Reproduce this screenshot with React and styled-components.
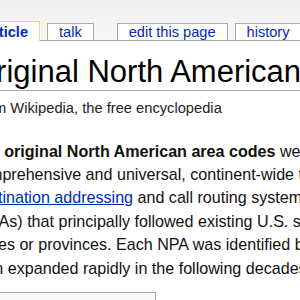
import React from 'react';
import styled, { createGlobalStyle } from 'styled-components';

const GlobalStyle = createGlobalStyle`
    html, body {
        margin: 0;
        padding: 0;
    }
    body {
        width: 300px;
        height: 300px;
        overflow: hidden;
        background: #f5f5f5;
        font-family: "Liberation Sans", Arial, sans-serif;
    }
`;

const Page = styled.div`
    width: 300px;
    height: 300px;
    overflow: hidden;
    display: flex;
    flex-direction: column;
    background: linear-gradient(180deg, #eeeeee 0px, #f4f4f4 22px, #f7f7f7 40px);
`;

const TabBar = styled.ul`
    display: flex;
    align-items: flex-end;
    list-style: none;
    height: 18px;
    margin: 0 0 0 -27px;
    padding: 22px 0 0 0;
    flex-shrink: 0;
`;

const Tab = styled.li`
    position: relative;
    z-index: 1;
    flex-shrink: 0;
    height: ${props => props.selected ? '19px' : '16px'};
    margin: 0 7px ${props => props.selected ? '-1px' : '0'} ${props => props.gap || 0}px;
    border: 1px solid ${props => props.selected ? '#f5d47c' : '#aaaaaa'};
    border-bottom: none;
    background: #ffffff;
    display: flex;
    align-items: center;
`;

const TabLink = styled.a`
    display: block;
    padding: 0 11px;
    font-size: 14.6px;
    line-height: 16px;
    color: #002bb8;
    font-weight: ${props => props.selected ? 'bold' : 'normal'};
    text-decoration: none;
    white-space: nowrap;
`;

const Content = styled.div`
    flex: 1;
    margin-left: -28px;
    background: #ffffff;
    border-top: 1px solid #aaaaaa;
    color: #000000;
`;

const Title = styled.h1`
    margin: 13px 0 0 0;
    font-size: 31px;
    font-weight: normal;
    line-height: 36px;
    white-space: nowrap;
    border-bottom: 1px solid #aaaaaa;
`;

const SiteSub = styled.div`
    margin-top: 8px;
    font-size: 14.7px;
    line-height: 18px;
    color: #222222;
    white-space: nowrap;
`;

const Para = styled.p`
    margin: 22.5px 0 0 0;
    font-size: 16.1px;
    line-height: 23.4px;
    white-space: nowrap;
    color: #111111;
`;

const Link = styled.a`
    color: #002bb8;
    text-decoration: underline;
`;

const Toc = styled.div`
    margin-top: 12px;
    width: 182px;
    height: 60px;
    border: 1px solid #aaaaaa;
    background: #f9f9f9;
    font-size: 14px;
    font-weight: bold;
    text-align: center;
    padding-top: 6px;
`;

const tabs = [
    { label: 'article', selected: true },
    { label: 'talk' },
    { label: 'edit this page', gap: 16 },
    { label: 'history' },
];

export default function App() {
    return (
        <>
            <GlobalStyle />
            <Page>
                <TabBar>
                    {tabs.map(tab => (
                        <Tab key={tab.label} selected={tab.selected} gap={tab.gap}>
                            <TabLink selected={tab.selected}>{tab.label}</TabLink>
                        </Tab>
                    ))}
                </TabBar>
                <Content>
                    <Title>Original North American area codes</Title>
                    <SiteSub>From Wikipedia, the free encyclopedia</SiteSub>
                    <Para>
                        The <b>original North American area codes</b> were established in 1947 by AT&amp;T as a<br />
                        comprehensive and universal, continent-wide telephone numbering plan for<br />
                        <Link>destination addressing</Link> and call routing systems in North America.<br />
                        (NPAs) that principally followed existing U.S. state and Canadian province<br />
                        states or provinces. Each NPA was identified by a three-digit area code.<br />
                        then expanded rapidly in the following decades as demand grew.
                    </Para>
                    <Toc>Contents</Toc>
                </Content>
            </Page>
        </>
    );
}
